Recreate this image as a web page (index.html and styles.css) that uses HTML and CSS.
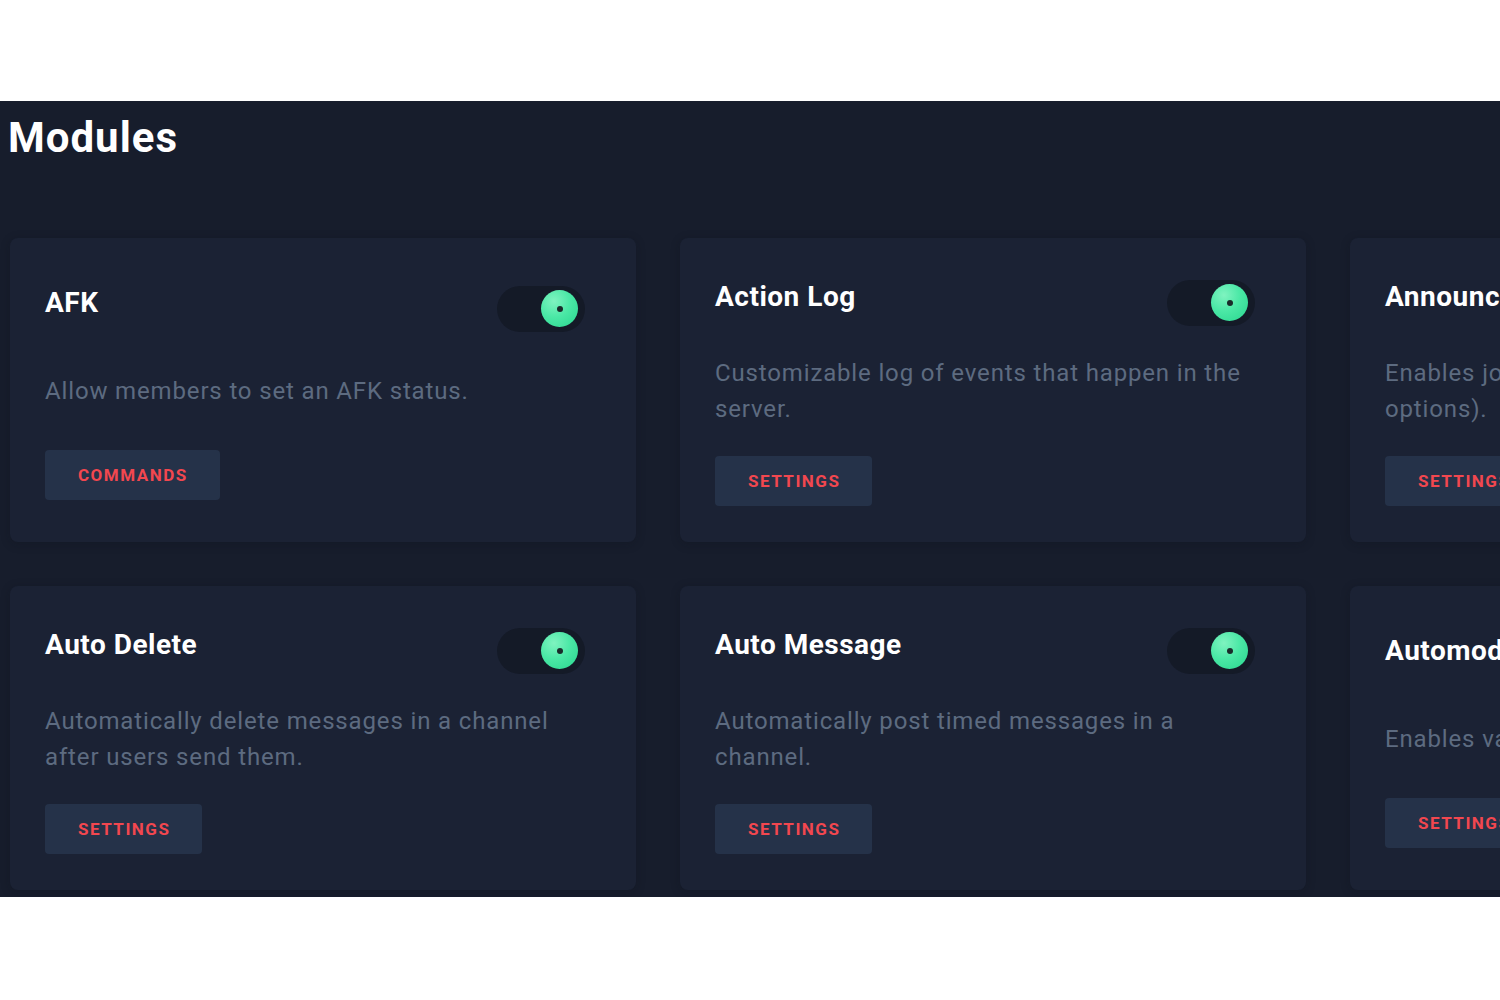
FILE: index.html
```html
<!DOCTYPE html>
<html lang="en">
<head>
<meta charset="utf-8">
<title>Modules</title>
<link rel="stylesheet" href="styles.css">
</head>
<body>
<main class="panel">
  <h1 class="page-title">Modules</h1>
  <div class="grid">
    <section class="card">
      <div class="card-head">
        <h2 class="card-title">AFK</h2>
        <div class="toggle on"><span class="knob"></span></div>
      </div>
      <p class="card-desc">Allow members to set an AFK status.</p>
      <div><button class="btn">COMMANDS</button></div>
    </section>
    <section class="card">
      <div class="card-head">
        <h2 class="card-title">Action Log</h2>
        <div class="toggle on"><span class="knob"></span></div>
      </div>
      <p class="card-desc">Customizable log of events that happen in the server.</p>
      <div><button class="btn">SETTINGS</button></div>
    </section>
    <section class="card">
      <div class="card-head">
        <h2 class="card-title">Announcements</h2>
        <div class="toggle on"><span class="knob"></span></div>
      </div>
      <p class="card-desc">Enables join and leave messages (and other options).</p>
      <div><button class="btn">SETTINGS</button></div>
    </section>
    <section class="card">
      <div class="card-head">
        <h2 class="card-title">Auto Delete</h2>
        <div class="toggle on"><span class="knob"></span></div>
      </div>
      <p class="card-desc">Automatically delete messages in a channel after users send them.</p>
      <div><button class="btn">SETTINGS</button></div>
    </section>
    <section class="card">
      <div class="card-head">
        <h2 class="card-title">Auto Message</h2>
        <div class="toggle on"><span class="knob"></span></div>
      </div>
      <p class="card-desc">Automatically post timed messages in a channel.</p>
      <div><button class="btn">SETTINGS</button></div>
    </section>
    <section class="card">
      <div class="card-head">
        <h2 class="card-title">Automod</h2>
        <div class="toggle on"><span class="knob"></span></div>
      </div>
      <p class="card-desc">Enables various automod features.</p>
      <div><button class="btn">SETTINGS</button></div>
    </section>
  </div>
</main>
</body>
</html>
```
FILE: styles.css
```css
* { box-sizing: border-box; }

html, body {
  margin: 0;
  background: #ffffff;
}

body {
  padding-top: 101px;
  font-family: Roboto, "Liberation Sans", Arial, sans-serif;
  overflow: hidden;
}

.panel {
  height: 796px;
  background: #171d2c;
  padding: 12px 0 0 10px;
  overflow: hidden;
}

.page-title {
  margin: 0 0 75px -2px;
  font-size: 42px;
  line-height: 50px;
  font-weight: 700;
  color: #ffffff;
  letter-spacing: 1px;
}

.grid {
  display: grid;
  grid-template-columns: repeat(3, 626px);
  grid-auto-rows: 304px;
  gap: 44px;
}

.card {
  background: #1b2234;
  border-radius: 8px;
  padding: 27px 51px 21px 35px;
  display: flex;
  flex-direction: column;
  justify-content: space-around;
  box-shadow: 0 2px 10px rgba(10, 14, 24, 0.25);
}

.card-head {
  display: flex;
  justify-content: space-between;
  align-items: flex-start;
}

.card-title {
  margin: 0;
  font-size: 28px;
  line-height: 34px;
  font-weight: 700;
  color: #ffffff;
  letter-spacing: 0.5px;
  white-space: nowrap;
}

.toggle {
  flex: none;
  width: 88px;
  height: 46px;
  border-radius: 23px;
  background: #141a27;
  display: flex;
  align-items: center;
  justify-content: flex-end;
  padding-right: 7px;
}

.knob {
  width: 37px;
  height: 37px;
  border-radius: 50%;
  background: radial-gradient(circle at 35% 30%, #7ff3c0 0%, #4be8a6 45%, #28d68e 100%);
  display: flex;
  align-items: center;
  justify-content: center;
}

.knob::after {
  content: "";
  width: 6px;
  height: 6px;
  border-radius: 50%;
  background: #1a2a2a;
}

.card-desc {
  margin: 0;
  font-size: 24px;
  line-height: 36px;
  letter-spacing: 0.85px;
  color: #5d6b80;
}

.btn {
  height: 50px;
  padding: 0 32px 0 33px;
  border: none;
  border-radius: 4px;
  background: #253249;
  color: #f2474f;
  font-family: inherit;
  font-size: 17px;
  font-weight: 700;
  letter-spacing: 1.5px;
}
```
